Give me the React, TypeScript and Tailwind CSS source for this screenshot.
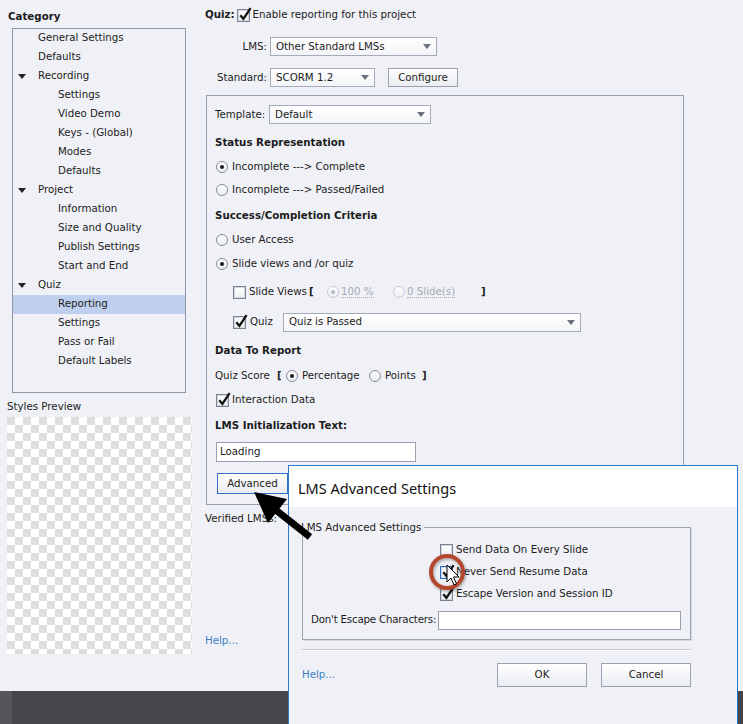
import React from "react";

type CheckProps = { checked?: boolean; focus?: boolean };

function Check({ checked, focus }: CheckProps) {
  return (
    <span
      className={
        "relative inline-block w-[13px] h-[13px] shrink-0 border bg-[linear-gradient(#ffffff,#eef0f4)] shadow-[inset_0_0_0_1px_#d3d6de] " +
        (focus ? "border-[#2d6fd0]" : "border-[#7c8292]")
      }
    >
      {checked && (
        <svg
          className="absolute -top-[4px] left-0 w-[14px] h-[16px] overflow-visible"
          viewBox="0 0 14 16"
        >
          <path d="M2.3 9.2 L5.4 12.8 L12.6 2.2" fill="none" stroke="#111" strokeWidth="2.3" />
        </svg>
      )}
    </span>
  );
}

function Radio({ checked, disabled }: { checked?: boolean; disabled?: boolean }) {
  return (
    <span
      className={
        "flex items-center justify-center w-[12px] h-[12px] shrink-0 rounded-full border bg-[linear-gradient(#ffffff,#eceef2)] " +
        (disabled ? "border-[#c6cad3]" : "border-[#858b9b]")
      }
    >
      {checked && (
        <span className={"w-[4px] h-[4px] rounded-full " + (disabled ? "bg-[#b3b7c0]" : "bg-[#1a1a1a]")} />
      )}
    </span>
  );
}

function Select({ value, className }: { value: string; className: string }) {
  return (
    <div
      className={
        "flex h-[19px] items-stretch border border-[#a6abba] bg-[linear-gradient(#ffffff,#f3f4f7)] " + className
      }
    >
      <span className="flex-1 flex items-center pl-[5px]">{value}</span>
      <span className="w-[18px] flex items-center justify-center">
        <svg width="8" height="5" viewBox="0 0 8 5">
          <path d="M0 0 H8 L4 5 Z" fill="#6c7182" />
        </svg>
      </span>
    </div>
  );
}

function Button({ label, className }: { label: string; className: string }) {
  return (
    <div
      className={
        "flex items-center justify-center border bg-[linear-gradient(#ffffff,#eaecf1)] " + className
      }
    >
      {label}
    </div>
  );
}

const categories: { label: string; level: number; open?: boolean; selected?: boolean }[] = [
  { label: "General Settings", level: 1 },
  { label: "Defaults", level: 1 },
  { label: "Recording", level: 1, open: true },
  { label: "Settings", level: 2 },
  { label: "Video Demo", level: 2 },
  { label: "Keys - (Global)", level: 2 },
  { label: "Modes", level: 2 },
  { label: "Defaults", level: 2 },
  { label: "Project", level: 1, open: true },
  { label: "Information", level: 2 },
  { label: "Size and Quality", level: 2 },
  { label: "Publish Settings", level: 2 },
  { label: "Start and End", level: 2 },
  { label: "Quiz", level: 1, open: true },
  { label: "Reporting", level: 2, selected: true },
  { label: "Settings", level: 2 },
  { label: "Pass or Fail", level: 2 },
  { label: "Default Labels", level: 2 },
];

export default function App() {
  return (
    <div className="relative w-[743px] h-[724px] overflow-hidden bg-[#eff1f6] text-[#1c1c1c] text-[10.25px] font-['DejaVu_Sans',sans-serif] flex flex-col">
      <div className="flex h-[691px]">
        {/* Left column */}
        <div className="w-[200px] shrink-0">
          <div className="h-[28px] pt-[9px] pl-[8px] leading-[14px] font-bold">Category</div>
          <div className="ml-[12px] w-[174px] h-[365px] border border-[#8f96a8]">
            {categories.map((c, i) => (
              <div
                key={i}
                className={
                  "relative h-[19px] leading-[17px] " +
                  (c.level === 1 ? "pl-[25px] " : "pl-[45px] ") +
                  (c.selected ? "bg-[#bfd0ee]" : "")
                }
              >
                {c.open && (
                  <svg className="absolute left-[5px] top-[7px]" width="8" height="5" viewBox="0 0 8 5">
                    <path d="M0 0 H8 L4 5 Z" fill="#222" />
                  </svg>
                )}
                {c.label}
              </div>
            ))}
          </div>
          <div className="mt-[6px] pl-[7px] h-[14px] leading-[14px]">Styles Preview</div>
          <div className="mt-[4px] ml-[7px] w-[185px] h-[237px] bg-[image:conic-gradient(#ffffff_25%,#dedede_0_50%,#ffffff_0_75%,#dedede_0)] bg-[length:16px_16px]" />
        </div>

        {/* Right column */}
        <div className="flex-1 flex flex-col">
          <div className="h-[30px] flex items-center pl-[5px]">
            <span className="font-bold">Quiz:</span>
            <span className="ml-[2px] flex"><Check checked /></span>
            <span className="ml-[3px]">Enable reporting for this project</span>
          </div>
          <div className="mt-[7px] h-[19px] flex">
            <span className="w-[70px] pr-[3px] text-right leading-[19px]">LMS:</span>
            <Select value="Other Standard LMSs" className="w-[167px]" />
          </div>
          <div className="mt-[12px] h-[19px] flex">
            <span className="w-[70px] pr-[3px] text-right leading-[19px]">Standard:</span>
            <Select value="SCORM 1.2" className="w-[105px]" />
            <Button label="Configure" className="ml-[13px] w-[70px] h-[19px] border-[#9ca1b1]" />
          </div>

          {/* Group box */}
          <div className="mt-[8px] ml-[6px] w-[478px] h-[410px] border border-[#9ca1b1] pt-[9px]">
            <div className="h-[19px] flex pl-[8px]">
              <span className="w-[54px] leading-[19px]">Template:</span>
              <Select value="Default" className="w-[162px]" />
            </div>
            <div className="mt-[9px] h-[20px] flex items-center pl-[8px] font-bold">Status Representation</div>
            <div className="mt-[4px] h-[20px] flex items-center pl-[9px]">
              <Radio checked />
              <span className="ml-[4px]">Incomplete ---&gt; Complete</span>
            </div>
            <div className="mt-[3px] h-[20px] flex items-center pl-[9px]">
              <Radio />
              <span className="ml-[4px]">Incomplete ---&gt; Passed/Failed</span>
            </div>
            <div className="mt-[6px] h-[20px] flex items-center pl-[8px] font-bold">Success/Completion Criteria</div>
            <div className="mt-[4px] h-[20px] flex items-center pl-[9px]">
              <Radio />
              <span className="ml-[4px]">User Access</span>
            </div>
            <div className="mt-[4px] h-[20px] flex items-center pl-[9px]">
              <Radio checked />
              <span className="ml-[4px]">Slide views and /or quiz</span>
            </div>
            <div className="mt-[8px] h-[20px] flex items-center pl-[26px]">
              <Check />
              <span className="ml-[3px] w-[60px]">Slide Views</span>
              <span className="w-[18px] font-bold">[</span>
              <Radio checked disabled />
              <span className="ml-[2px] w-[52px]">
                <span className="text-[#a5a9b3] border-b border-dotted border-[#a5a9b3]">100 %</span>
              </span>
              <Radio disabled />
              <span className="ml-[2px] w-[74px]">
                <span className="text-[#a5a9b3] border-b border-dotted border-[#a5a9b3]">0 Slide(s)</span>
              </span>
              <span className="font-bold">]</span>
            </div>
            <div className="mt-[10px] h-[20px] flex items-center pl-[26px]">
              <Check checked />
              <span className="ml-[4px] w-[33px]">Quiz</span>
              <Select value="Quiz is Passed" className="w-[298px]" />
            </div>
            <div className="mt-[9px] h-[20px] flex items-center pl-[8px] font-bold">Data To Report</div>
            <div className="mt-[5px] h-[20px] flex items-center pl-[8px]">
              <span className="w-[62px]">Quiz Score</span>
              <span className="w-[9px] font-bold">[</span>
              <Radio checked />
              <span className="ml-[4px] w-[67px]">Percentage</span>
              <Radio />
              <span className="ml-[4px] w-[37px]">Points</span>
              <span className="font-bold">]</span>
            </div>
            <div className="mt-[4px] h-[20px] flex items-center pl-[9px]">
              <Check checked />
              <span className="ml-[3px]">Interaction Data</span>
            </div>
            <div className="mt-[6px] h-[20px] flex items-center pl-[8px] font-bold">LMS Initialization Text:</div>
            <div className="mt-[6px] ml-[9px] w-[200px] h-[20px] flex items-center pl-[3px] border border-[#9aa0b0] bg-white">
              Loading
            </div>
            <Button label="Advanced" className="mt-[11px] ml-[10px] w-[71px] h-[21px] border-[#2f6fcf]" />
          </div>

          <div className="mt-[5px] h-[18px] flex items-center pl-[5px]">Verified LMSs:</div>
          <div className="mt-[104px] h-[18px] flex items-center pl-[5px] text-[#3b7fc6]">Help...</div>
        </div>
      </div>

      {/* Bottom bar */}
      <div className="flex flex-1">
        <div className="w-[12px] bg-[#54565c]" />
        <div className="flex-1 bg-[#45464b]" />
      </div>

      {/* Dialog window */}
      <div className="absolute left-[288px] top-[465px] w-[450px] h-[259px] border-x border-t border-[#2b78d3] bg-[#eff1f6] flex flex-col">
        <div className="h-[41px] bg-white flex items-center pl-[9px] pt-[4px] text-[14.5px] text-[#111] font-['Noto_Sans',sans-serif]">
          LMS Advanced Settings
        </div>
        <div className="px-[13px] pt-[13px]">
          <fieldset className="w-[389px] border border-[#9ea3b1] shadow-[1px_1px_0_#d6d9e1] pb-[9px]">
            <legend className="-ml-[2px] pr-[3px] leading-[14px]">LMS Advanced Settings</legend>
            <div className="mt-[6px] h-[20px] flex items-center pl-[137px]">
              <Check />
              <span className="ml-[3px]">Send Data On Every Slide</span>
            </div>
            <div className="mt-[2px] h-[20px] flex items-center pl-[137px]">
              <Check checked focus />
              <span className="ml-[3px]">Never Send Resume Data</span>
            </div>
            <div className="mt-[2px] h-[20px] flex items-center pl-[137px]">
              <Check checked />
              <span className="ml-[3px]">Escape Version and Session ID</span>
            </div>
            <div className="mt-[6px] h-[20px] flex items-center pl-[8px] pr-[9px]">
              <span className="shrink-0 whitespace-nowrap tracking-[-0.2px]">Don't Escape Characters:</span>
              <span className="ml-[2px] flex-1 h-[19px] border border-[#9aa0b0] bg-white" />
            </div>
          </fieldset>
          <div className="mt-[9px] w-[389px] border-t border-b border-t-[#c6c9d2] border-b-white" />
          <div className="mt-[12px] w-[389px] h-[24px] flex items-center">
            <span className="text-[#3b7fc6]">Help...</span>
            <Button label="OK" className="ml-auto w-[90px] h-[24px] border-[#9aa0b0]" />
            <Button label="Cancel" className="ml-[14px] w-[90px] h-[24px] border-[#9aa0b0]" />
          </div>
        </div>
      </div>

      {/* Annotations: arrow, circle, cursor */}
      <svg className="absolute inset-0 pointer-events-none" width="743" height="724" viewBox="0 0 743 724">
        <defs>
          <filter id="sh" x="-30%" y="-30%" width="160%" height="160%">
            <feDropShadow dx="1" dy="1.5" stdDeviation="1.5" floodColor="#000" floodOpacity="0.35" />
          </filter>
        </defs>
        <line x1="277" y1="511" x2="310" y2="537" stroke="#000" strokeWidth="7" />
        <path d="M254 492 L287 499 L268 523 Z" fill="#000" />
        <circle cx="447" cy="572" r="16" fill="none" stroke="#b3462f" strokeWidth="4" filter="url(#sh)" />
        <path
          d="M447 565 L447 582 L451 578 L454 585 L456.5 584 L453.5 577 L459 577 Z"
          fill="#fff"
          stroke="#000"
          strokeWidth="1"
        />
      </svg>
    </div>
  );
}
